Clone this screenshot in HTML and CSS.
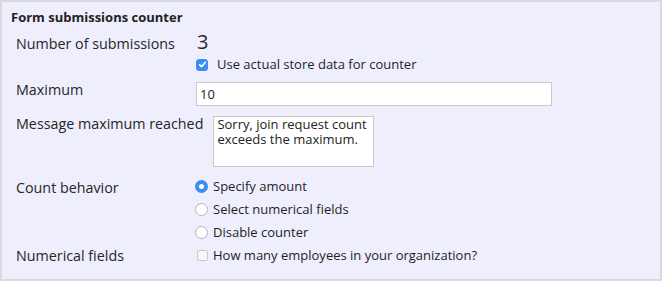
FILE: index.html
```html
<!DOCTYPE html>
<html lang="en">
<head>
  <meta charset="UTF-8" />
  <title>Form submissions counter</title>
  <link rel="stylesheet" href="styles.css">
</head>
<body>
  <div class="panel">
    <h3 class="panel-title">Form submissions counter</h3>

    <div class="row row-count">
      <div class="label">Number of submissions</div>
      <div class="field">
        <div class="count">3</div>
        <label class="option">
          <span class="check checked">
            <svg width="9" height="9" viewBox="0 0 9 9"><path d="M1.6 4.8 L3.6 6.7 L7.4 2.3" fill="none" stroke="#fff" stroke-width="1.6" stroke-linecap="round" stroke-linejoin="round"/></svg>
          </span>
          Use actual store data for counter
        </label>
      </div>
    </div>

    <div class="row row-max">
      <div class="label">Maximum</div>
      <div class="field">
        <input class="text-input" type="text" value="10" />
      </div>
    </div>

    <div class="row row-message">
      <div class="label">Message maximum reached</div>
      <div class="field">
        <textarea class="message">Sorry, join request count exceeds the maximum.</textarea>
      </div>
    </div>

    <div class="row row-behavior">
      <div class="label">Count behavior</div>
      <div class="field">
        <label class="option"><span class="radio selected"></span>Specify amount</label>
        <label class="option"><span class="radio"></span>Select numerical fields</label>
        <label class="option"><span class="radio"></span>Disable counter</label>
      </div>
    </div>

    <div class="row row-fields">
      <div class="label">Numerical fields</div>
      <div class="field">
        <label class="option"><span class="check"></span>How many employees in your organization?</label>
      </div>
    </div>
  </div>
</body>
</html>
```

FILE: styles.css
```css
html, body {
  margin: 0;
  background: #ffffff;
}
body {
  font-family: 'Open Sans', sans-serif;
  color: #262626;
}
.panel {
  width: 662px;
  height: 281px;
  box-sizing: border-box;
  background: #eeeefc;
  border: 2px solid #d9d9e0;
  padding: 6px 0 0 9px;
}
.panel-title {
  margin: 0;
  font-size: 13px;
  font-weight: 700;
  line-height: 18px;
  color: #222;
}
.row {
  display: flex;
  align-items: flex-start;
  gap: 10px;
  padding-left: 5px;
}
.row-count { margin-top: 8px; }
.row-max { margin-top: 4px; }
.row-message { margin-top: 8px; }
.row-behavior { margin-top: 8px; }
.row-fields { margin-top: 0; }

.label {
  flex: 0 0 auto;
  min-width: 170px;
  font-size: 14.3px;
  line-height: 20px;
  white-space: nowrap;
}
.row-max .field,
.row-message .field { margin-top: 2px; }
.row-behavior .label { margin-top: 3px; }
.row-fields .label { margin-top: 2px; }

.field {
  display: flex;
  flex-direction: column;
}
.count {
  font-size: 20px;
  line-height: 20px;
  margin-top: -2px;
  margin-left: 1px;
}
.row-count .option { margin-top: 1px; }
.option {
  display: flex;
  align-items: center;
  font-size: 13px;
  line-height: 23px;
  color: #1f1f1f;
}
.check {
  flex: 0 0 auto;
  width: 11px;
  height: 11px;
  box-sizing: border-box;
  border: 1px solid #c8c8cc;
  border-radius: 2px;
  background: #f7f7fa;
  margin: 0 5px 0 1px;
  display: flex;
  align-items: center;
  justify-content: center;
}
.check.checked {
  background: #3a8ef0;
  border-color: #3a8ef0;
  width: 12px;
  height: 12px;
  border-radius: 3px;
  margin: 0 9px 0 0;
}
.radio {
  flex: 0 0 auto;
  width: 13px;
  height: 13px;
  box-sizing: border-box;
  border: 1px solid #b4b4b8;
  border-radius: 50%;
  background: #fff;
  margin: 0 5px 0 -1px;
}
.radio.selected {
  border: 4.5px solid #3a8ef0;
}
.text-input {
  width: 356px;
  height: 24px;
  box-sizing: border-box;
  border: 1px solid #c9c9cc;
  background: #fff;
  font-family: 'Open Sans', sans-serif;
  font-size: 13px;
  color: #222;
  padding: 0 3px;
  margin: 0;
  outline: none;
}
.message {
  width: 161px;
  height: 51px;
  box-sizing: border-box;
  border: 1px solid #c9c9cc;
  background: #fff;
  font-family: 'Open Sans', sans-serif;
  font-size: 13px;
  line-height: 14.5px;
  color: #222;
  padding: 0 3px;
  margin: 0;
  resize: none;
  overflow: hidden;
}
```
